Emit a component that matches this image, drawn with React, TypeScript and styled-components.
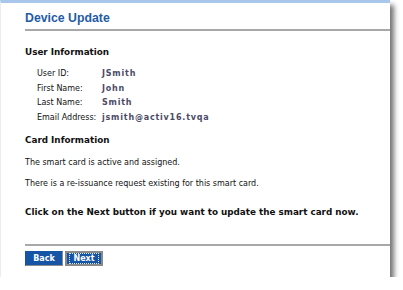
import * as React from 'react'
import styled, { createGlobalStyle } from 'styled-components'

const BLUE = '#1f5ca6'
const BUTTON_BLUE = '#1655a5'
const SKY = '#a9c7ea'
const RULE = '#a8a8a8'
const SLATE = '#4b4b66'

const GlobalStyle = createGlobalStyle`
  html, body {
    margin: 0;
    padding: 0;
    background: #ffffff;
  }
`

const Panel = styled.div`
  box-sizing: border-box;
  width: 390px;
  height: 277px;
  display: flex;
  flex-direction: column;
  padding-left: 24px;
  background: #ffffff;
  border-top: 3px solid ${SKY};
  border-left: 1px solid #ececec;
  box-shadow: 4px 5px 5px rgba(0, 0, 0, 0.55);
  font-family: 'DejaVu Sans', Verdana, sans-serif;
  font-size: 8px;
  color: #111111;
`

const Title = styled.h1`
  margin: 0;
  padding: 7px 0 3px;
  font-family: 'Liberation Sans', Arial, sans-serif;
  font-size: 12.3px;
  line-height: 16px;
  font-weight: bold;
  color: ${BLUE};
  border-bottom: 2px solid ${RULE};
`

const Heading = styled.h2<{ $gap: number }>`
  margin: ${(p) => p.$gap}px 0 0;
  font-size: 8.8px;
  line-height: 12px;
  font-weight: bold;
`

const InfoGrid = styled.div`
  display: grid;
  grid-template-columns: 65px auto;
  margin: 9px 0 0 12px;
  line-height: 14.7px;
`

const Label = styled.div``

const Value = styled.div`
  font-weight: bold;
  color: ${SLATE};
  letter-spacing: 0.8px;
`

const Text = styled.p<{ $gap: number; $bold?: boolean }>`
  margin: ${(p) => p.$gap}px 0 0;
  line-height: 12px;
  font-size: ${(p) => (p.$bold ? '8.8px' : '8px')};
  font-weight: ${(p) => (p.$bold ? 'bold' : 'normal')};
`

const Footer = styled.div`
  margin-top: auto;
  padding: 5px 0 11px;
  border-top: 2px solid ${RULE};
  display: flex;
  gap: 2px;
`

const Button = styled.button<{ $focused?: boolean }>`
  box-sizing: border-box;
  width: 38px;
  height: 15px;
  padding: 0;
  margin: 0;
  font-family: 'DejaVu Sans', Verdana, sans-serif;
  font-size: 8px;
  font-weight: bold;
  color: #ffffff;
  background: ${BUTTON_BLUE};
  border: ${(p) => (p.$focused ? '2px' : '1px')} solid;
  border-color: ${(p) =>
    p.$focused ? '#8a8a8a' : '#1655a5 #8c8c8c #8c8c8c #1655a5'};
`

const FocusRing = styled.span`
  display: inline-block;
  padding: 0 3px;
  line-height: 9px;
  outline: 1px dotted #dde6f2;
`

const rows: [string, string][] = [
  ['User ID:', 'JSmith'],
  ['First Name:', 'John'],
  ['Last Name:', 'Smith'],
  ['Email Address:', 'jsmith@activ16.tvqa'],
]

export default function App() {
  return (
    <>
      <GlobalStyle />
      <Panel>
        <Title>Device Update</Title>
        <Heading $gap={15}>User Information</Heading>
        <InfoGrid>
          {rows.map(([label, value]) => (
            <React.Fragment key={label}>
              <Label>{label}</Label>
              <Value>{value}</Value>
            </React.Fragment>
          ))}
        </InfoGrid>
        <Heading $gap={8}>Card Information</Heading>
        <Text $gap={11}>The smart card is active and assigned.</Text>
        <Text $gap={9}>There is a re-issuance request existing for this smart card.</Text>
        <Text $gap={16} $bold>
          Click on the Next button if you want to update the smart card now.
        </Text>
        <Footer>
          <Button>Back</Button>
          <Button $focused>
            <FocusRing>Next</FocusRing>
          </Button>
        </Footer>
      </Panel>
    </>
  )
}
